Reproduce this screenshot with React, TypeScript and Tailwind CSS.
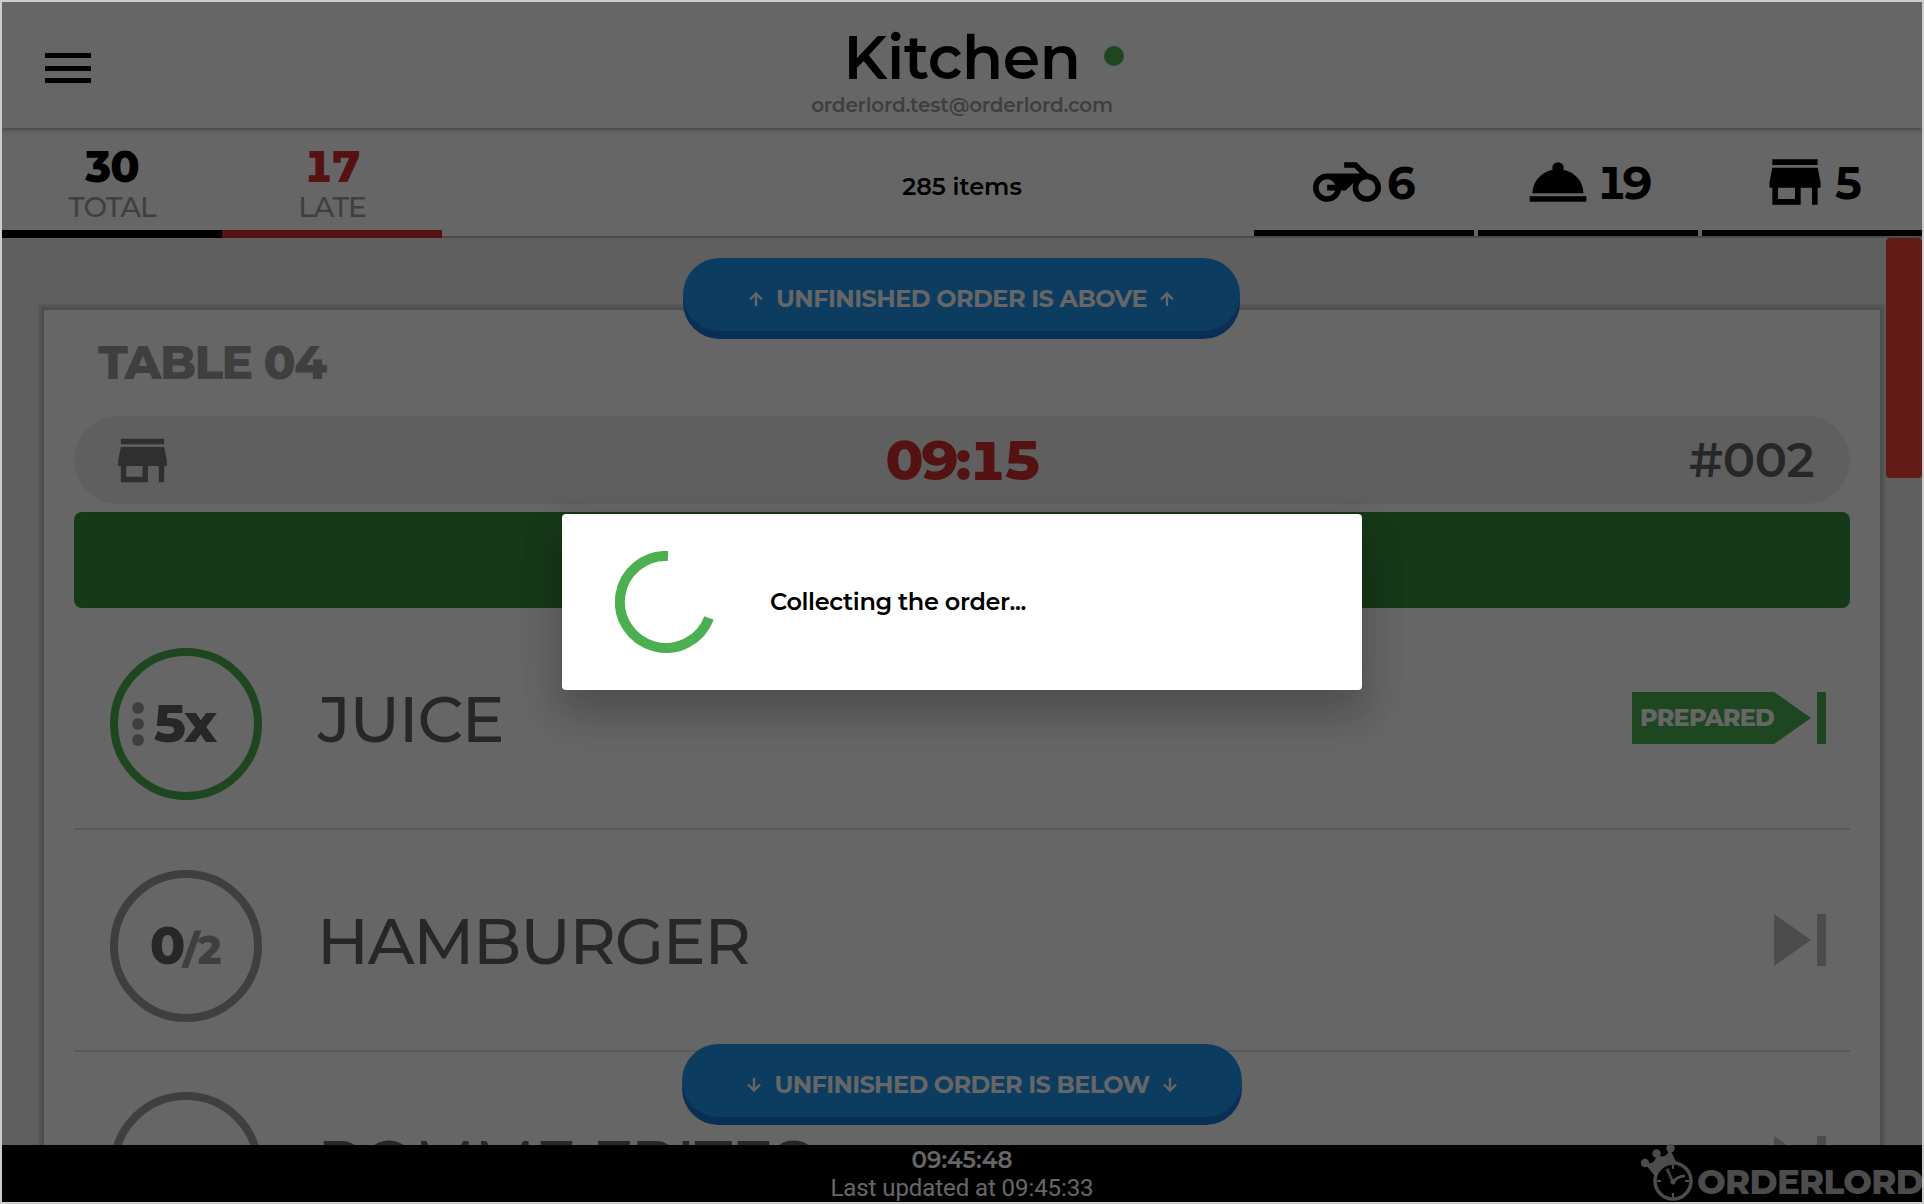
import React from "react";

const STORE =
  "M20 4H4v2h16V4zm1 10v-2l-1-5H4l-1 5v2h1v6h10v-6h4v6h2v-6h1zm-9 4H6v-4h6v4z";
const BIKE =
  "M19.44 9.03L15.41 5H11v2h3.59l2 2H5c-2.8 0-5 2.2-5 5s2.2 5 5 5c2.46 0 4.45-1.69 4.9-4h1.65l2.77-2.77c-.21.54-.32 1.14-.32 1.77 0 2.8 2.2 5 5 5s5-2.2 5-5c0-2.65-1.97-4.77-4.56-4.97zM7.82 15C7.4 16.15 6.28 17 5 17c-1.63 0-3-1.37-3-3s1.37-3 3-3c1.28 0 2.4.85 2.82 2H5v2h2.82zM19 17c-1.66 0-3-1.34-3-3s1.34-3 3-3 3 1.34 3 3-1.34 3-3 3z";
const DOME =
  "M12 5a2 2 0 0 1 2 2c0 .24-.04.47-.12.69C17.95 8.5 21 11.91 21 16H3c0-4.09 3.05-7.5 7.12-8.31-.08-.22-.12-.45-.12-.69a2 2 0 0 1 2-2M22 19H2v-2h20v2z";

function Icon({ d, className }: { d: string; className: string }) {
  return (
    <svg viewBox="0 0 24 24" fill="currentColor" className={className}>
      <path d={d} />
    </svg>
  );
}

function Counter({ icon, pad, children }: { icon: string; pad: string; children: React.ReactNode }) {
  return (
    <div className={`flex h-[108px] w-[220px] items-start border-b-[6px] border-black pt-5 ${pad}`}>
      <Icon d={icon} className="size-[68px] shrink-0" />
      {children}
    </div>
  );
}

function Arrow({ down }: { down?: boolean }) {
  return (
    <svg viewBox="0 0 14 14" className="size-[14px]" fill="none" stroke="currentColor" strokeWidth="2.4">
      <path d={down ? "M7 0v12M1 6.5l6 6 6-6" : "M7 14V2M1 7.5l6-6 6 6"} />
    </svg>
  );
}

function Skip() {
  return (
    <svg viewBox="0 0 52 52" className="size-[52px] text-[#bdbdbd]" fill="currentColor">
      <path d="M0 0l37 26L0 52zM43 0h9v52h-9z" />
    </svg>
  );
}

function Row({ name, badge, green, action }: { name: React.ReactNode; badge: React.ReactNode; green?: boolean; action: React.ReactNode }) {
  return (
    <div className="flex h-[222px] shrink-0 items-start border-b-2 border-[#e0e0e0] pt-10 pr-6 pl-9">
      <div
        className={`flex size-[152px] shrink-0 items-center justify-center rounded-full border-8 ${
          green ? "border-[#4caf50]" : "border-[#9e9e9e]"
        }`}
      >
        {badge}
      </div>
      <div className="flex h-[142px] grow items-center text-[64px] font-medium tracking-[-1.3px] text-[#616161]">{name}</div>
      <div className="mt-11">{action}</div>
    </div>
  );
}

function Logo() {
  return (
    <div className="flex h-[58px] items-end text-[#bdbdbd]">
      <svg viewBox="0 0 54 58" className="h-[58px] w-[54px]" fill="none" stroke="currentColor">
        <g fill="currentColor" stroke="none">
          <circle cx="5" cy="19" r="4.2" />
          <circle cx="16.5" cy="9.5" r="4.2" />
          <circle cx="30.5" cy="4.3" r="4.2" />
          <path d="M5 20L7 19Q15 21 17 10Q25 17 30 5L37 20Q22 19 15 32Z" />
        </g>
        <circle cx="33" cy="37" r="18" fill="#000" strokeWidth="3.5" />
        <path d="M33 21v4M33 49v4M17 37h4M45 37h4" strokeWidth="2" />
        <path d="M27 25l6 13" strokeWidth="4" />
        <path d="M26 26l5 11M29 25l4 10" strokeWidth="0.8" stroke="#000" />
        <path d="M33 38q5-6 12-6" strokeWidth="3" />
        <circle cx="33" cy="38" r="2.5" fill="currentColor" stroke="none" />
      </svg>
      <span className="mb-[3px] ml-[3px] text-[34px] leading-[34px] font-extrabold tracking-[-0.7px] whitespace-nowrap">
        ORDERLORD
      </span>
    </div>
  );
}

export default function App() {
  return (
    <div className="h-[1204px] w-[1924px] overflow-hidden border-2 border-[#cccccc] font-['Montserrat','Inter',sans-serif]">
      <div className="relative flex h-full flex-col overflow-hidden bg-[#eeeeee] text-black">
        <header className="relative z-10 flex h-[126px] shrink-0 justify-center bg-white shadow-[0_1px_5px_rgba(0,0,0,0.45)]">
          <div className="absolute top-[51px] left-[43px] flex w-[46px] flex-col gap-[7.5px]">
            <div className="h-[5px] bg-black" />
            <div className="h-[5px] bg-black" />
            <div className="h-[5px] bg-black" />
          </div>
          <div className="flex flex-col items-center">
            <div className="relative mt-[20px] text-[60px] leading-[72px] font-semibold tracking-[-0.4px]">
              Kitchen
              <span className="absolute top-[24px] left-[260px] size-5 rounded-full bg-[#4caf50]" />
            </div>
            <div className="mt-[-1px] text-[20px] leading-6 font-semibold tracking-[-0.2px] text-[#9e9e9e]">
              orderlord.test@orderlord.com
            </div>
          </div>
        </header>

        <div className="flex h-[110px] shrink-0 items-start bg-white shadow-[inset_0_-2px_0_#bdbdbd]">
          <div className="flex h-[110px] w-[220px] flex-col items-center border-b-8 border-black pt-[19px]">
            <span className="text-[43px] leading-10 font-extrabold tracking-[-1px]">30</span>
            <span className="mt-[4px] text-[28px] leading-8 font-medium tracking-[-0.9px] text-[#9e9e9e]">TOTAL</span>
          </div>
          <div className="flex h-[110px] w-[220px] flex-col items-center border-b-8 border-[#d32f2f] pt-[19px]">
            <span className="mr-[2px] text-[43px] leading-10 font-extrabold tracking-[-2.5px] text-[#d32f2f] tabular-nums">
              17
            </span>
            <span className="mt-[4px] text-[28px] leading-8 font-medium tracking-[-0.9px] text-[#9e9e9e]">LATE</span>
          </div>
          <div className="flex h-[118px] w-[1040px] items-center justify-center text-[24px] font-semibold">
            285 items
          </div>
          <div className="ml-[-228px] flex shrink-0 gap-1">
            <Counter icon={BIKE} pad="pl-[59px]">
              <span className="mt-3 ml-[6px] text-[45px] leading-[46px] font-bold">6</span>
            </Counter>
            <Counter icon={DOME} pad="pl-[46px]">
              <span className="mt-3 ml-[4px] text-[45px] leading-[46px] font-bold tracking-[-6px] tabular-nums">19</span>
            </Counter>
            <Counter icon={STORE} pad="pl-[59px]">
              <span className="mt-3 ml-[6px] text-[45px] leading-[46px] font-bold">5</span>
            </Counter>
          </div>
        </div>

        <main className="flex h-[907px] shrink-0 items-start overflow-hidden">
          <section className="mt-[72px] ml-[42px] flex h-[1000px] w-[1836px] flex-col bg-white px-[30px] shadow-[0_0_0_1px_#bebebe,0_0_0_2px_#c4c4c4,0_0_0_3px_#cbcbcb,0_0_0_4px_#d2d2d2,0_0_0_5px_#d9d9d9,0_0_0_6px_#dedede]">
            <div className="mt-[25px] h-[60px] pl-[24px] text-[47px] leading-[56px] font-extrabold tracking-[-1.6px] text-[#9e9e9e]">
              TABLE 04
            </div>
            <div className="mt-[21px] flex h-[88px] shrink-0 items-center rounded-full bg-[#eeeeee] px-9">
              <div className="flex flex-1">
                <Icon d={STORE} className="size-[65px] text-[#757575]" />
              </div>
              <div className="mt-px text-[55px] leading-[80px] font-extrabold tracking-[-3.2px] text-[#d32f2f] tabular-nums">
                09:15
              </div>
              <div className="flex-1 text-right text-[48px] font-semibold tracking-[-0.4px] text-[#616161]">#002</div>
            </div>
            <div className="mt-2 h-24 shrink-0 rounded-lg bg-[#388e3c]" />
            <Row
              green
              badge={
                <div className="mr-[24px] flex items-center gap-[10px]">
                  <div className="flex flex-col gap-1">
                    <i className="size-3 rounded-full bg-[#9e9e9e]" />
                    <i className="size-3 rounded-full bg-[#9e9e9e]" />
                    <i className="size-3 rounded-full bg-[#9e9e9e]" />
                  </div>
                  <span className="text-[53px] font-extrabold tracking-[-1px] text-[#616161]">5x</span>
                </div>
              }
              name={<span className="ml-[56px]">JUICE</span>}
              action={
                <div className="flex gap-[6px]">
                  <div className="flex h-[52px] w-[179px] items-center bg-[#4caf50] pl-[8px] text-[24px] font-extrabold tracking-[-0.8px] text-white [clip-path:polygon(0_0,142px_0,100%_50%,142px_100%,0_100%)]">
                    PREPARED
                  </div>
                  <div className="w-[9px] bg-[#4caf50]" />
                </div>
              }
            />
            <Row
              badge={
                <div className="mr-[3px] flex items-baseline font-extrabold text-[#616161]">
                  <span className="text-[52px] tracking-[-2.5px]">0</span>
                  <span className="text-[40px] tracking-[-2px] text-[#9e9e9e]">/2</span>
                </div>
              }
              name={<span className="ml-[55px]">HAMBURGER</span>}
              action={<Skip />}
            />
            <Row badge={null} name={<span className="ml-[55px]">POMME FRITES</span>} action={<Skip />} />
          </section>
          <div className="ml-[6px] h-60 w-9 shrink-0 rounded bg-[#f44336]" />
        </main>

        <div className="absolute top-[256px] left-[681px] flex h-[73px] w-[557px] items-center justify-center gap-[13px] rounded-full bg-[#2196f3] pt-2 text-[24px] font-bold tracking-[-0.54px] text-white shadow-[0_8px_0_#1976d2]">
          <Arrow />
          UNFINISHED ORDER IS ABOVE
          <Arrow />
        </div>
        <div className="absolute top-[1042px] left-[680px] flex h-[73px] w-[560px] items-center justify-center gap-[13px] rounded-full bg-[#2196f3] pt-2 text-[24px] font-bold tracking-[-0.62px] text-white shadow-[0_8px_0_#1976d2]">
          <Arrow down />
          UNFINISHED ORDER IS BELOW
          <Arrow down />
        </div>

        <footer className="relative flex h-[57px] shrink-0 flex-col items-center bg-black pt-px text-white">
          <span className="text-[23px] leading-7 font-semibold">09:45:48</span>
          <span className="font-['Roboto',sans-serif] text-[24px] leading-7 tracking-[-0.08px]">
            Last updated at 09:45:33
          </span>
          <div className="absolute top-[-1px] left-[1638px]">
            <Logo />
          </div>
        </footer>

        <div className="absolute inset-0 z-20 flex items-start bg-black/60">
          <div className="mt-[512px] ml-[560px] flex h-44 w-[800px] items-center rounded bg-white pl-[53px] shadow-[0_24px_38px_3px_rgba(0,0,0,0.18),0_9px_46px_8px_rgba(0,0,0,0.06)]">
            <svg viewBox="0 0 102 102" className="size-[102px]" fill="none" stroke="#4caf50" strokeWidth="10">
              <path d="M53 5A46 46 0 1 0 94 67" />
            </svg>
            <span className="ml-[53px] text-[24px] font-semibold tracking-[-0.36px]">Collecting the order...</span>
          </div>
        </div>
      </div>
    </div>
  );
}
